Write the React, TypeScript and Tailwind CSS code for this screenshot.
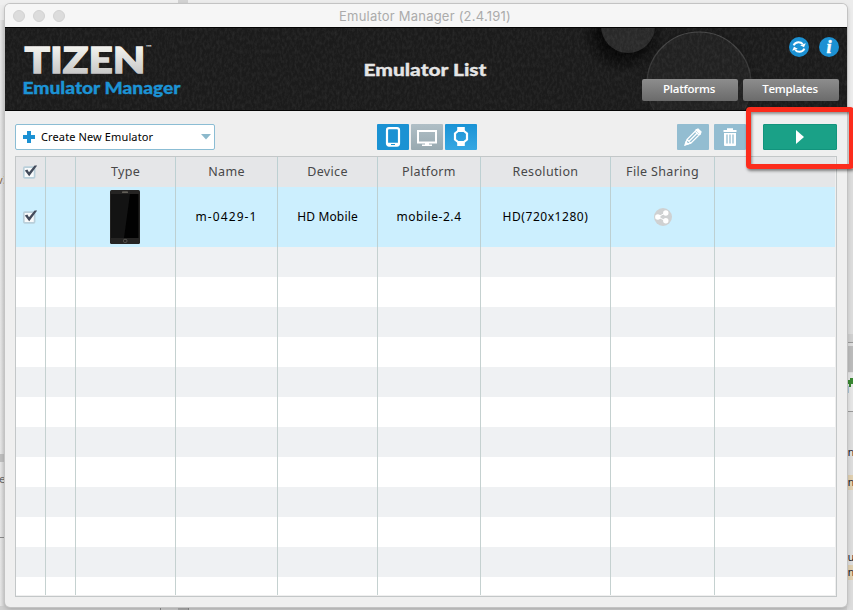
import React from "react";

const ui = "font-['Noto_Sans','Open_Sans',sans-serif]";

const columns = [
  { w: "w-[30px]", head: "", cell: "", track: "" },
  { w: "w-[30px]", head: "", cell: "", track: "" },
  { w: "w-[100px]", head: "Type", cell: "phone", track: "" },
  { w: "w-[102px]", head: "Name", cell: "m-0429-1", track: "tracking-[1.1px]" },
  { w: "w-[100px]", head: "Device", cell: "HD Mobile", track: "tracking-[.15px]" },
  { w: "w-[103px]", head: "Platform", cell: "mobile-2.4", track: "tracking-[.55px]" },
  { w: "w-[130px]", head: "Resolution", cell: "HD(720x1280)", track: "tracking-[.55px]" },
  { w: "w-[104px]", head: "File Sharing", cell: "share", track: "" },
];

function CheckBox() {
  return (
    <svg className="mr-px" width="16" height="16" viewBox="0 0 16 16">
      <rect x="1.8" y="3.2" width="10.8" height="10.6" rx="1" fill="#f8fafb" stroke="#b9cfda" strokeWidth="1.7" />
      <path d="M2.8 6.4 L5.4 5.6 L7 8.2 L12.6 1.4 L15.2 1.4 L7.2 12.2 Z" fill="#434b5b" />
    </svg>
  );
}

function Phone() {
  return (
    <svg className="mr-[2px]" width="30" height="54" viewBox="0 0 30 54">
      <rect width="30" height="54" rx="1.5" fill="#252423" />
      <rect x="1.5" y="4" width="27" height="44" fill="#020202" />
      <path d="M1.5 4H20L14 48H1.5Z" fill="#131313" />
      <rect x="12" y="1.6" width="6" height="1.2" rx=".6" fill="#77736b" />
      <rect x="13.5" y="49.4" width="3.4" height="3" rx="1" fill="none" stroke="#66625d" strokeWidth=".8" />
    </svg>
  );
}

function Share() {
  return (
    <svg width="18" height="18" viewBox="0 0 18 18">
      <circle cx="9" cy="9" r="9" fill="#cfd1d2" />
      <path d="M12 4.5L4 9L12 13" fill="none" stroke="#fff" strokeWidth="1" />
      <circle cx="3.8" cy="9" r="2.7" fill="#fff" />
      <circle cx="11.8" cy="5" r="2.7" fill="#fff" />
      <circle cx="11.8" cy="12.8" r="2.7" fill="#fff" />
    </svg>
  );
}

function Header() {
  return (
    <header className="relative h-[84px] shrink-0 overflow-hidden bg-[#1b1b1b]">
      <svg className="absolute inset-0" width="842" height="84">
        <defs>
          <filter id="grain" x="0" y="0" width="100%" height="100%">
            <feTurbulence type="fractalNoise" baseFrequency="0.4 0.22" numOctaves="4" seed="8" />
            <feColorMatrix type="matrix" values="0 0 0 0 1  0 0 0 0 1  0 0 0 0 1  .45 0 0 0 -.15" />
          </filter>
          <linearGradient id="silver" x1="0" y1="0" x2="0" y2="1">
            <stop offset=".25" stopColor="#f1f1ed" />
            <stop offset=".85" stopColor="#c8c8c8" />
          </linearGradient>
          <linearGradient id="rim" x1="0" y1="0" x2="0" y2="1">
            <stop offset="0" stopColor="#484848" />
            <stop offset=".6" stopColor="#2c2c2c" />
            <stop offset="1" stopColor="#222" />
          </linearGradient>
          <radialGradient id="shade">
            <stop offset=".55" stopColor="#000" stopOpacity=".7" />
            <stop offset="1" stopColor="#000" stopOpacity="0" />
          </radialGradient>
        </defs>
        <circle cx="618" cy="5" r="42" fill="url(#shade)" />
        <circle cx="623" cy="-1" r="27" fill="#292929" />
        <circle cx="694" cy="58" r="64" fill="url(#shade)" opacity=".35" />
        <circle cx="694" cy="57" r="52" fill="#212121" stroke="url(#rim)" strokeWidth="1.2" />
        <rect width="842" height="84" filter="url(#grain)" opacity=".26" />
        <path d="M0 .5H842M0 83.5H842" stroke="#050505" />
        <text x="19.5" y="45.5" textLength="121" lengthAdjust="spacingAndGlyphs" fontFamily="Lato" fontWeight="900" fontSize="36.5" fill="url(#silver)" stroke="url(#silver)" strokeWidth="1.3">TIZEN</text>
        <text x="141" y="22" textLength="6" lengthAdjust="spacingAndGlyphs" fontFamily="Lato" fontWeight="700" fontSize="6" fill="#ddd">™</text>
        <text x="17.5" y="67" textLength="158" lengthAdjust="spacingAndGlyphs" fontFamily="Lato" fontWeight="900" fontSize="16" fill="#1c93d5" stroke="#1c93d5" strokeWidth=".3">Emulator Manager</text>
        <text x="358.5" y="49" textLength="123" lengthAdjust="spacingAndGlyphs" fontFamily="Lato" fontWeight="900" fontSize="17" fill="#e5e5e5" stroke="#e5e5e5" strokeWidth=".3">Emulator List</text>
      </svg>
      <div className="relative flex h-full flex-col items-end justify-between pt-[10px] pr-2 pb-[10px]">
        <div className="flex gap-[10px]">
          <svg width="20" height="20" viewBox="0 0 20 20">
            <circle cx="10" cy="10" r="10" fill="#1c91d3" />
            <path d="M4.6 8.4Q6 5.2 9.6 5.2Q12.2 5.2 13.8 7.2M15.4 11.6Q14 14.8 10.4 14.8Q7.8 14.8 6.2 12.8" fill="none" stroke="#fff" strokeWidth="1.9" />
            <path d="M16.8 6.2L15 10.2L11.2 8.2ZM3.2 13.8L5 9.8L8.8 11.8Z" fill="#fff" />
          </svg>
          <svg width="20" height="20" viewBox="0 0 20 20">
            <circle cx="10" cy="10" r="10" fill="#1c91d3" />
            <text x="10" y="15.5" textAnchor="middle" fontFamily="Liberation Serif" fontStyle="italic" fontWeight="bold" fontSize="18" fill="#fff" stroke="#fff" strokeWidth=".5">i</text>
          </svg>
        </div>
        <div className="flex gap-[5px] font-['Open_Sans'] text-[11.5px] leading-[18px] font-semibold text-white">
          <button className="h-[22px] w-24 rounded-[2px] bg-linear-to-b from-[#8d8d8d] to-[#6b6b6b] pr-[2px] pb-[3px] tracking-[-.25px]">Platforms</button>
          <button className="h-[22px] w-24 rounded-[2px] bg-linear-to-b from-[#8d8d8d] to-[#6b6b6b] pr-[2px] pb-[3px] tracking-[-.25px]">Templates</button>
        </div>
      </div>
    </header>
  );
}

function Toolbar() {
  return (
    <div className="flex h-[45px] shrink-0 items-start pt-[13px] pl-[10px]">
      <button className="flex h-[26px] w-[200px] items-center rounded-[2px] border border-[#8bbdd4] bg-white pr-[3px] pl-[7px]">
        <svg width="12" height="12" viewBox="0 0 12 12"><path d="M4 0H8V4H12V8H8V12H4V8H0V4H4Z" fill="#1c91d3" /></svg>
        <span className={`ml-[6px] text-[11px] leading-4 tracking-[.12px] text-black ${ui}`}>Create New Emulator</span>
        <svg className="ml-auto" width="10" height="6" viewBox="0 0 10 6"><path d="M0 0H10L5 5.5Z" fill="#8cb9cc" /></svg>
      </button>
      <div className="ml-[162px] flex gap-[2px]">
        <button className="flex h-[26px] w-8 items-center justify-center rounded-[1px] bg-[#1b92d3]">
          <svg width="16" height="20" viewBox="0 0 16 20"><rect x="2" y="1.2" width="12" height="17.4" rx="2" fill="none" stroke="#fff" strokeWidth="2.2" /><path d="M2 15.8H14V18H2Z" fill="#fff" /><path d="M6 17.5H10" stroke="#1b92d3" strokeWidth="1" /></svg>
        </button>
        <button className="flex h-[26px] w-8 items-center justify-center rounded-[1px] bg-linear-to-b from-[#b0bfc6] to-[#98a9b0]">
          <svg className="mt-px" width="22" height="18" viewBox="0 0 22 18"><rect x="2" y="2" width="18" height="11.5" fill="none" stroke="#fff" strokeWidth="2" /><path d="M9 14H13V15.5H16V17H6V15.5H9Z" fill="#fff" /></svg>
        </button>
        <button className="flex h-[26px] w-8 items-center justify-center rounded-[1px] bg-linear-to-b from-[#1993d5] to-[#36a7e2]">
          <svg width="16" height="20" viewBox="0 0 16 20"><path d="M4.2 0H11.8V4H4.2ZM4.2 15H11.8V19H4.2Z" fill="#fff" /><path d="M5 4H11L14 6.5V12.5L11 15H5L2 12.5V6.5Z" fill="none" stroke="#fff" strokeWidth="2.2" /></svg>
        </button>
      </div>
      <button className="ml-[200px] flex h-[26px] w-8 items-center justify-center rounded-[1px] bg-[#93bdd1]">
        <svg width="18" height="18" viewBox="0 0 18 18" fill="none" stroke="#fff" strokeWidth="1.3"><path d="M1.7 16.5L3 11.5L12.5 2L16.3 5.8L6.8 15.2ZM5 13.2L13.5 4.7M11.2 3.3L15 7M3 11.5L6.8 15.2" /><path d="M12.3 1.8L14 1L17 4L16.2 5.8Z" fill="#fff" /><path d="M1 17L2 14L4 16Z" fill="#fff" /></svg>
      </button>
      <button className="ml-[5px] flex h-[26px] w-8 items-center justify-center rounded-[1px] bg-[#93bdd1]">
        <svg width="14" height="18" viewBox="0 0 14 18"><path d="M.5 2H4V.3H10V2H13.5V4H.5Z" fill="#fff" /><path d="M1 5H13V17Q13 18 12 18H2Q1 18 1 17Z" fill="#fff" /><path d="M4 6.5V15.5M7 6.5V15.5M10 6.5V15.5" stroke="#93bdd1" strokeWidth="1.3" /></svg>
      </button>
      <button className="ml-[17px] flex h-[26px] w-[74px] items-center justify-center rounded-[1px] border border-[#12947d] bg-[#1aa187]">
        <svg className="mr-px" width="8" height="14" viewBox="0 0 8 14"><path d="M0 0L8 7L0 14Z" fill="#fff" /></svg>
      </button>
    </div>
  );
}

function Table() {
  return (
    <div className={`relative mx-[10px] flex h-[441px] w-[822px] flex-col overflow-hidden border border-[#c3c7c8] bg-[#efefef] pr-px pb-px ${ui}`}>
      <div className="flex h-[30px] shrink-0 bg-[#e5e6e8] text-[12.5px] text-[#484848]">
        {columns.map((c, i) => (
          <div key={i} className={`${c.w} flex shrink-0 items-center justify-center border-r border-[#bdd0d2] tracking-[.35px] whitespace-nowrap`}>
            {i === 0 ? <CheckBox /> : c.head}
          </div>
        ))}
      </div>
      <div className="flex h-[60px] shrink-0 bg-[#cceffe] text-[12px] text-black">
        {columns.map((c, i) => (
          <div key={i} className={`${c.w} ${c.track} flex shrink-0 items-center justify-center border-r border-[#bdd0d2] whitespace-nowrap`}>
            {i === 0 ? <CheckBox /> : c.cell === "phone" ? <Phone /> : c.cell === "share" ? <Share /> : c.cell}
          </div>
        ))}
      </div>
      {Array.from({ length: 12 }, (_, r) => (
        <div key={r} className={`flex h-[30px] shrink-0 ${r % 2 ? "bg-white" : "bg-[#eff1f3]"}`}>
          {columns.map((c, i) => <div key={i} className={`${c.w} shrink-0 border-r border-[#c5d1d0]`} />)}
        </div>
      ))}
      <div className="absolute inset-x-0 bottom-0 h-px bg-[#efefef]" />
    </div>
  );
}

export default function App() {
  return (
    <div className="relative h-[610px] w-[853px] overflow-hidden bg-[#ececec]">
      <svg className="absolute inset-0" width="853" height="610">
        <defs>
          <linearGradient id="side"><stop stopColor="#e6e6e6" /><stop offset="1" stopColor="#c9c9c9" /></linearGradient>
        </defs>
        <rect x="0" y="0" width="178" height="5" fill="#efefef" />
        <rect x="178" y="0" width="10" height="5" fill="#d2d2d2" />
        <rect x="0" y="20" width="6" height="590" fill="url(#side)" />
        <rect x="0" y="454" width="6" height="8" fill="#bdbdbd" />
        <path d="M0 537.5H6" stroke="#888" />
        <rect x="0" y="606" width="853" height="4" fill="#cfcfcf" />
        <rect x="178" y="606" width="10" height="4" fill="#adadad" />
        <path d="M160.5 606V610M188.5 606V610" stroke="#8c8c8c" />
        <rect x="847" y="110" width="6" height="500" fill="#dcdcdc" />
        <rect x="847" y="334" width="6" height="9" fill="#cfcfcf" />
        <path d="M847 342.5H853M847 411.5H853" stroke="#999" />
        <rect x="847" y="346" width="6" height="26" fill="#bbb" />
        <rect x="847" y="373" width="6" height="38" fill="#e5e5e5" />
        <path d="M847 380H850V378H853V384H851V387H849V384H847Z" fill="#398632" />
        <path d="M847 386H849V393H847Z" fill="#a7c2d4" />
        <rect x="847" y="475" width="6" height="15" fill="#dfcfb0" />
        <rect x="847" y="565" width="6" height="15" fill="#dfcfb0" />
        <g fontFamily="DejaVu Sans" fontSize="11" fill="#25252d">
          <text x="847.5" y="456">n</text><text x="847.5" y="486">n</text><text x="847.5" y="561">u</text><text x="847.5" y="576">n</text>
          <text x="-3" y="184" fill="#8a6844" fontSize="10">v3</text><text x="-1" y="483" fill="#666">e</text>
        </g>
      </svg>
      <main className="absolute top-[4px] left-[5px] flex h-[603px] w-[842px] flex-col overflow-hidden rounded-[5px] bg-[#efefef] shadow-[0_0_0_1px_#c3c3c3,0_2px_5px_rgba(0,0,0,.22)]">
        <div className={`relative flex h-[23px] shrink-0 items-center justify-center bg-[#f6f6f6] ${ui}`}>
          <div className="absolute left-2 flex gap-2">
            {[0, 1, 2].map((i) => <i key={i} className="h-3 w-3 rounded-full border border-[#d2d2d2] bg-[#dcdcdc]" />)}
          </div>
          <span className="mt-px ml-[-2px] font-['Inter'] text-[13px] leading-4 tracking-[.22px] text-[#ababab]">Emulator Manager (2.4.191)</span>
        </div>
        <Header />
        <Toolbar />
        <Table />
      </main>
      <div className="absolute top-[107px] left-[746px] h-[62px] w-[108px] rounded-[4px] border-[5px] border-[#fc2c1c] shadow-[1px_2px_3px_rgba(0,0,0,.45),inset_1px_2px_3px_rgba(0,0,0,.4)]" />
    </div>
  );
}
